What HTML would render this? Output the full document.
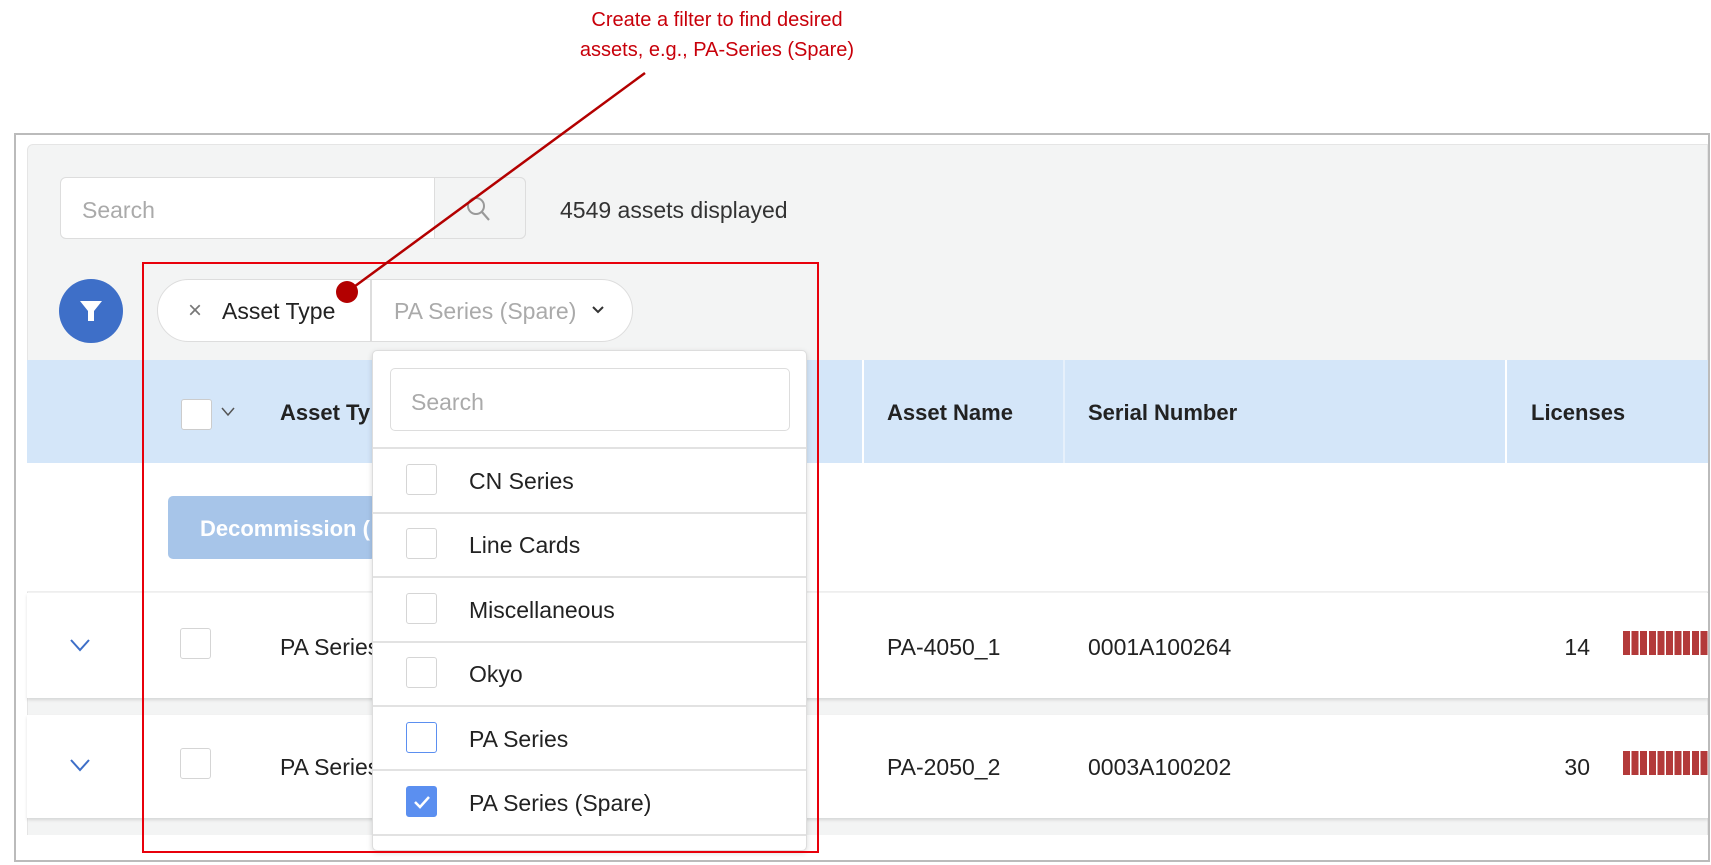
<!DOCTYPE html>
<html><head><meta charset="utf-8"><style>
*{box-sizing:border-box;margin:0;padding:0}
body{width:1711px;height:865px;background:#fff;position:relative;overflow:hidden;font-family:"Liberation Sans",sans-serif;color:#222}
.a{position:absolute}
.t{position:absolute;white-space:nowrap;font-size:23px;line-height:26px}
.cb{position:absolute;width:31px;height:31px;border:1.5px solid #d5d5d5;border-radius:3px;background:#fff}
.sep{position:absolute;left:0;right:0;height:2px;background:#e2e2e2}
.h{font-weight:bold;color:#222;font-size:22px}
.bars{position:absolute;height:24px;background:repeating-linear-gradient(90deg,#b33a3a 0 7px,#fff 7px 8.6px)}
</style></head><body>
<div class="t" style="left:520px;top:5px;width:394px;text-align:center;color:#c8000a;font-size:20px;line-height:30px">Create a filter to find desired<br>assets, e.g., PA-Series (Spare)</div>

<div class="a" style="left:14px;top:133px;width:1696px;height:729px;background:#fff"></div>
<div class="a" style="left:27px;top:144px;width:1681px;height:720px;background:#f3f4f4;border:1px solid #e5e5e5;border-radius:6px 0 0 0"></div>

<!-- search -->
<div class="a" style="left:60px;top:177px;width:466px;height:62px;background:#fff;border:1.5px solid #ddd;border-radius:6px"></div>
<div class="a" style="left:434px;top:177px;width:92px;height:62px;background:#f3f4f4;border:1.5px solid #ddd;border-radius:0 6px 6px 0"></div>
<div class="t" style="left:82px;top:197px;color:#aaa">Search</div>
<svg class="a" style="left:464px;top:194px" width="30" height="30" viewBox="0 0 30 30"><circle cx="12" cy="12" r="8" fill="none" stroke="#999" stroke-width="2"/><line x1="18" y1="18" x2="25" y2="26" stroke="#999" stroke-width="2.2"/></svg>
<div class="t" style="left:560px;top:197px;color:#333">4549 assets displayed</div>

<!-- filter -->
<div class="a" style="left:59px;top:279px;width:64px;height:64px;border-radius:50%;background:#3e6fc8"></div>
<svg class="a" style="left:77px;top:297px" width="28" height="28" viewBox="0 0 28 28"><path d="M3 4h22l-8 10v10h-6V14z" fill="#fff"/></svg>
<div class="a" style="left:157px;top:279px;width:476px;height:63px;background:#fff;border:1.5px solid #ddd;border-radius:32px"></div>
<div class="a" style="left:370px;top:280px;width:1.5px;height:61px;background:#ddd"></div>
<div class="t" style="left:188px;top:298px;color:#777;font-size:24px">×</div>
<div class="t" style="left:222px;top:298px;color:#222">Asset Type</div>
<div class="t" style="left:394px;top:298px;color:#aaa">PA Series (Spare)</div>
<svg class="a" style="left:590px;top:302px" width="16" height="16" viewBox="0 0 16 16"><path d="M3 5l5 5 5-5" fill="none" stroke="#333" stroke-width="2"/></svg>

<!-- table header -->
<div class="a" style="left:27px;top:360px;width:1681px;height:103px;background:#d4e6f9"></div>
<div class="a" style="left:862px;top:360px;width:2px;height:103px;background:#fff"></div>
<div class="a" style="left:1063px;top:360px;width:2px;height:103px;background:#e6f0fb"></div>
<div class="a" style="left:1505px;top:360px;width:2px;height:103px;background:#fff"></div>
<div class="cb" style="left:181px;top:399px;border-color:#ccc"></div>
<svg class="a" style="left:220px;top:405px" width="16" height="14" viewBox="0 0 16 14"><path d="M2 3l6 7 6-7" fill="none" stroke="#555" stroke-width="1.5"/></svg>
<div class="t h" style="left:280px;top:400px">Asset Ty</div>
<div class="t h" style="left:887px;top:400px">Asset Name</div>
<div class="t h" style="left:1088px;top:400px">Serial Number</div>
<div class="t h" style="left:1531px;top:400px">Licenses</div>

<!-- content -->
<div class="a" style="left:27px;top:463px;width:1681px;height:129px;background:#fff;border-bottom:1px solid #eee"></div>
<div class="a" style="left:168px;top:496px;width:208px;height:63px;background:#a7c5e9;border-radius:5px"></div>
<div class="t" style="left:200px;top:516px;color:#fff;font-weight:bold;font-size:22px">Decommission (</div>

<div class="a" style="left:27px;top:593px;width:1681px;height:105px;background:#fff;box-shadow:0 2px 3px rgba(0,0,0,.12)"></div>
<div class="a" style="left:27px;top:715px;width:1681px;height:103px;background:#fff;box-shadow:0 2px 3px rgba(0,0,0,.12)"></div>
<div class="a" style="left:27px;top:835px;width:1681px;height:30px;background:#fff"></div>

<svg class="a" style="left:69px;top:637px" width="22" height="16" viewBox="0 0 22 16"><path d="M2 3l9 10 9-10" fill="none" stroke="#3e6fc8" stroke-width="2"/></svg>
<svg class="a" style="left:69px;top:757px" width="22" height="16" viewBox="0 0 22 16"><path d="M2 3l9 10 9-10" fill="none" stroke="#3e6fc8" stroke-width="2"/></svg>
<div class="cb" style="left:180px;top:628px"></div>
<div class="cb" style="left:180px;top:748px"></div>
<div class="t" style="left:280px;top:634px">PA Series</div>
<div class="t" style="left:280px;top:754px">PA Series</div>
<div class="t" style="left:887px;top:634px">PA-4050_1</div>
<div class="t" style="left:887px;top:754px">PA-2050_2</div>
<div class="t" style="left:1088px;top:634px">0001A100264</div>
<div class="t" style="left:1088px;top:754px">0003A100202</div>
<div class="t" style="left:1540px;width:50px;text-align:right;top:634px">14</div>
<div class="t" style="left:1540px;width:50px;text-align:right;top:754px">30</div>
<div class="bars" style="left:1623px;top:631px;width:85px"></div>
<div class="bars" style="left:1623px;top:751px;width:85px"></div>

<!-- dropdown -->
<div class="a" style="left:372px;top:350px;width:435px;height:501px;background:#fff;border:1px solid #ddd;border-radius:5px;box-shadow:0 2px 6px rgba(0,0,0,.15)">
 <div class="a" style="left:17px;top:17px;width:400px;height:63px;border:1.5px solid #ddd;border-radius:5px"></div>
 <div class="t" style="left:38px;top:38px;color:#aaa">Search</div>
 <div class="sep" style="top:96px"></div>
 <div class="sep" style="top:161px"></div>
 <div class="sep" style="top:225px"></div>
 <div class="sep" style="top:290px"></div>
 <div class="sep" style="top:354px"></div>
 <div class="sep" style="top:418px"></div>
 <div class="sep" style="top:483px"></div>
 <div class="cb" style="left:33px;top:113px"></div><div class="t" style="left:96px;top:117px">CN Series</div>
 <div class="cb" style="left:33px;top:177px"></div><div class="t" style="left:96px;top:181px">Line Cards</div>
 <div class="cb" style="left:33px;top:242px"></div><div class="t" style="left:96px;top:246px">Miscellaneous</div>
 <div class="cb" style="left:33px;top:306px"></div><div class="t" style="left:96px;top:310px">Okyo</div>
 <div class="cb" style="left:33px;top:371px;border-color:#5b8ff0"></div><div class="t" style="left:96px;top:375px">PA Series</div>
 <div class="cb" style="left:33px;top:435px;background:#5b8ff0;border-color:#5b8ff0"></div>
 <svg class="a" style="left:38px;top:441px" width="22" height="20" viewBox="0 0 22 20"><path d="M4 10l5 5 9-10" fill="none" stroke="#fff" stroke-width="2.5"/></svg>
 <div class="t" style="left:96px;top:439px">PA Series (Spare)</div>
</div>

<!-- outer frame -->
<div class="a" style="left:14px;top:133px;width:1696px;height:729px;border:2px solid #bbb"></div>

<!-- red box and annotation -->
<div class="a" style="left:142px;top:262px;width:677px;height:591px;border:2.5px solid #e8000b"></div>
<svg class="a" style="left:0;top:0" width="1711" height="865"><line x1="645" y1="73" x2="347" y2="292" stroke="#b30000" stroke-width="2.5"/><circle cx="347" cy="292" r="11" fill="#b30000"/></svg>
</body></html>
